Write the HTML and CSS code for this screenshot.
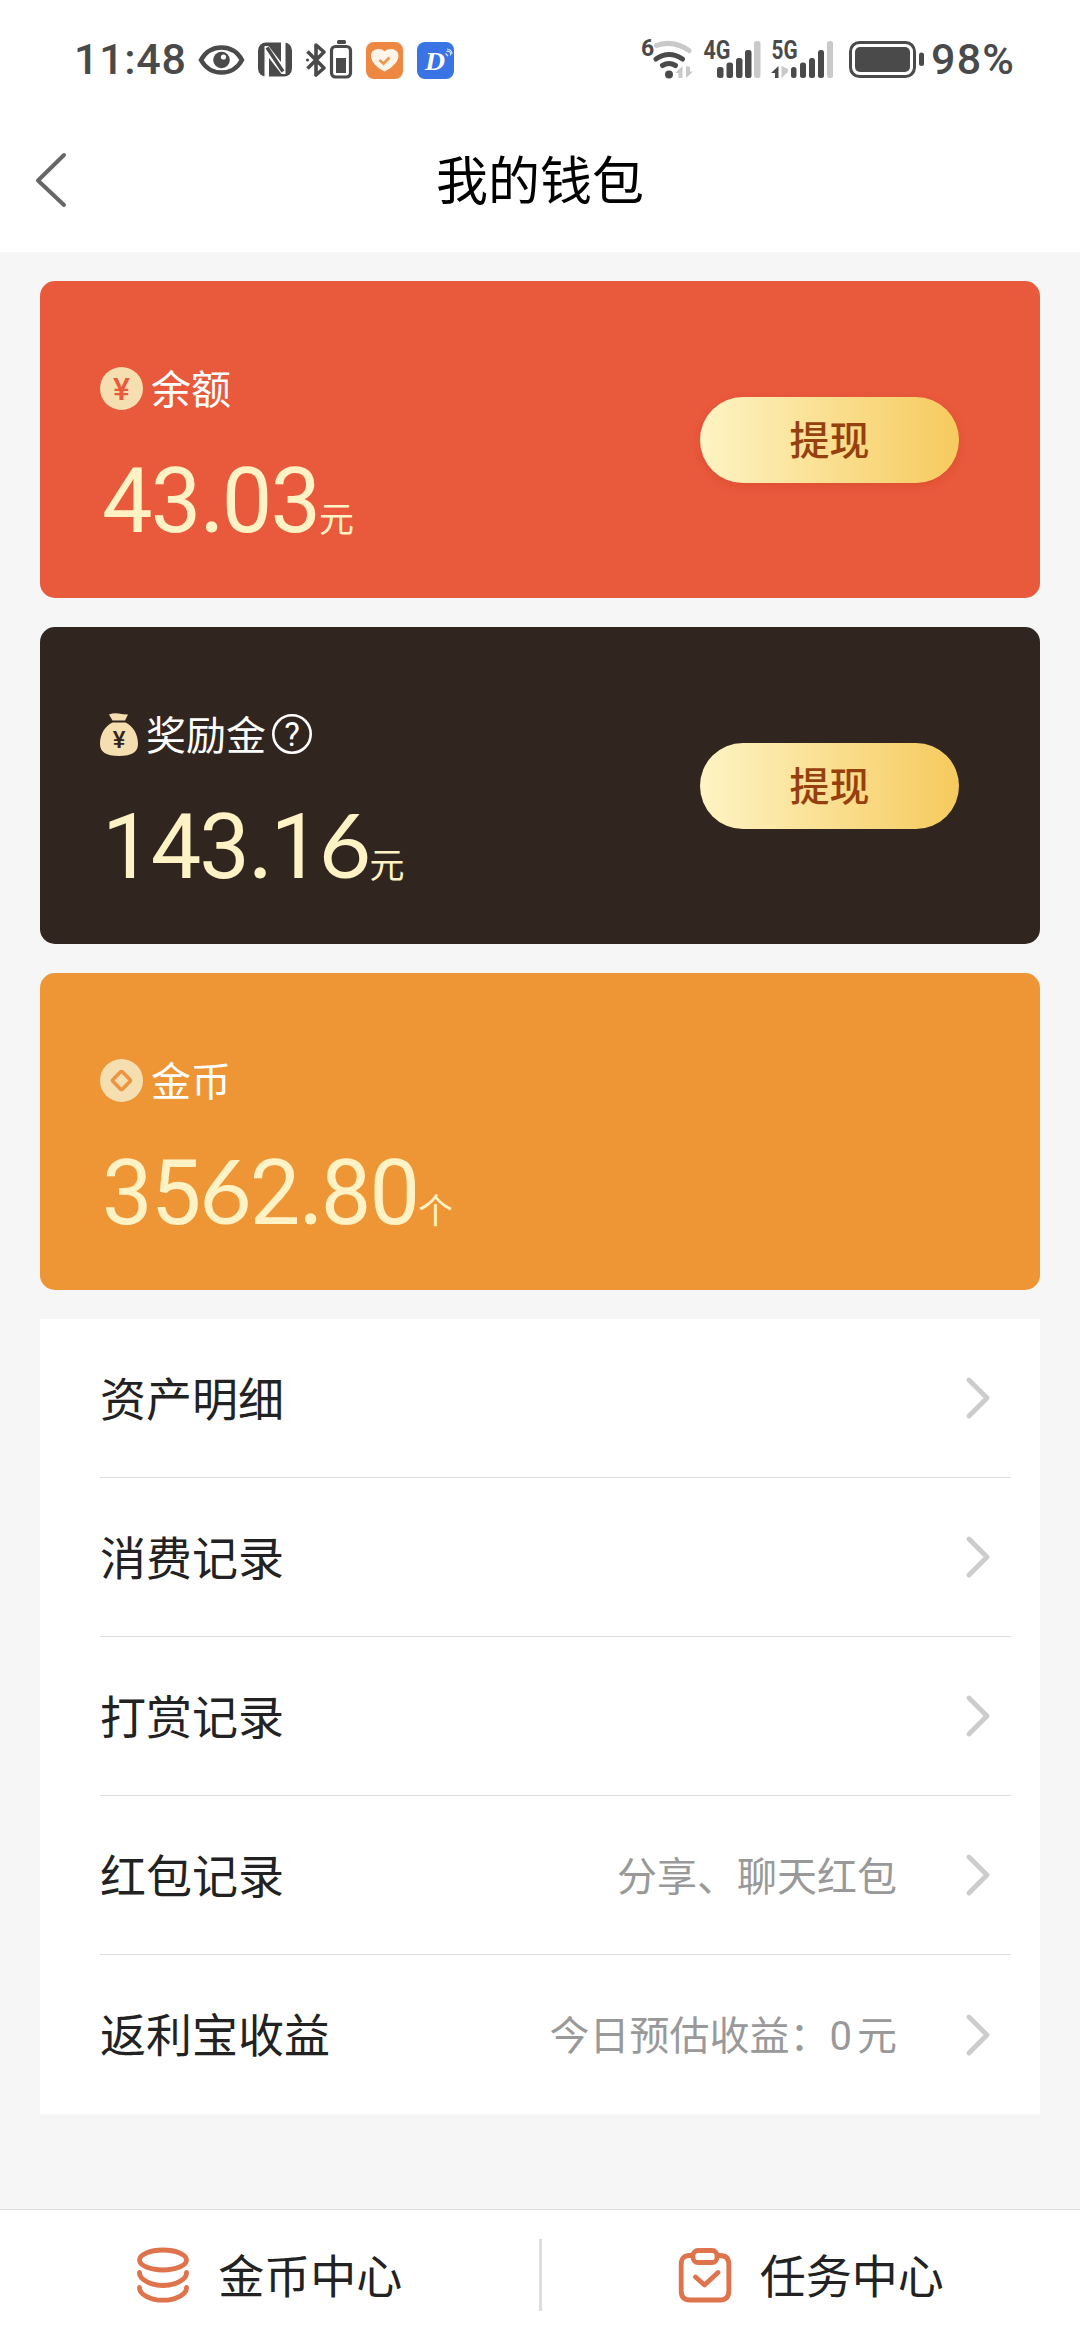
FILE: index.html
```html
<!DOCTYPE html>
<html lang="zh-CN">
<head>
<meta charset="utf-8">
<title>我的钱包</title>
<link rel="stylesheet" href="styles.css">
</head>
<body>
<div class="screen">
  <div class="status">
    <span class="clock">11:48</span>
    <svg class="status-left" viewBox="196 36 262 46" width="262" height="46">
      <path d="M201 60C206 51 213 47.500 221.500 47.500S237 51 242 60C237 69 230 72.500 221.500 72.500S206 69 201 60Z" fill="none" stroke="#4a4a4a" stroke-width="4.500"/>
      <circle cx="221.500" cy="60" r="8.300" fill="#4a4a4a"/>
      <circle cx="223.500" cy="57" r="2.600" fill="#fff"/>
      <rect x="258" y="42.500" width="34" height="34" rx="8" fill="#4a4a4a"/>
      <path d="M268 77.500L265.500 74V47L282 66V42M268.500 77V53L284.500 72V45L282 41.500" fill="none" stroke="#fff" stroke-width="0"/>
      <path d="M264.500 78V46H268.500L281 62V42H285.500V74H281.500L269 58V78Z" fill="#fff"/>
      <path d="M267 47.500L283 71.500" fill="none" stroke="#4a4a4a" stroke-width="3.500"/>
      <path d="M307.500 51.500L324 68L316 75V45L324 52L307.500 68.500" fill="none" stroke="#4a4a4a" stroke-width="3.600" stroke-linejoin="round"/>
      <circle cx="307.500" cy="60" r="1.600" fill="#4a4a4a"/>
      <rect x="337" y="40" width="9" height="4" rx="1.500" fill="#4a4a4a"/>
      <rect x="331.500" y="46.500" width="19" height="30.500" rx="4" fill="#fff" stroke="#4a4a4a" stroke-width="3.200"/>
      <rect x="336" y="58" width="10" height="15" fill="#4a4a4a"/>
      <rect x="366" y="42" width="37" height="37" rx="8" fill="#ee8742"/>
      <path d="M384.500 71.500C377 68 371 61.500 371 56C371 51 375 49 378.500 49C381.500 49 383.500 50 384.500 51.500C385.500 50 388 49 391 49C394.500 49 398.500 51 398.500 56C398.500 61.500 392 68 384.500 71.500Z" fill="#fff4e8"/>
      <path d="M379.500 60L383.500 63.500L389.500 57.500" fill="none" stroke="#e89a50" stroke-width="2.800"/>
      <rect x="417" y="42" width="37" height="37" rx="8" fill="#3a73e4"/>
      <text class="app-letter" x="425" y="70" textLength="20" lengthAdjust="spacingAndGlyphs">D</text>
      <path d="M445.500 53.500L448 56M446.500 51.500a3 3 0 0 1 4 4M447 49a5 5 0 0 1 5 5" fill="none" stroke="#dfe9ff" stroke-width="1.100"/>
    </svg>
    <svg class="status-right" viewBox="640 36 286 46" width="286" height="46">
      <text class="tag" x="641" y="55.500" font-size="23">6</text>
      <g fill="none" stroke="#4a4a4a" stroke-width="5" stroke-linecap="round">
        <path d="M656.500 45.500Q673 39.500 689 50.500" stroke="#c9c9c9"/>
        <path d="M656 59Q669 50 682.500 59"/>
        <path d="M662.500 65.500Q669 61.500 675.500 65.500"/>
      </g>
      <circle cx="669" cy="74.500" r="4" fill="#4a4a4a"/>
      <path d="M675 73L682.500 66V78H678.500V73ZM686 66V78L693 71.500H690V67Z" fill="#c9c9c9"/>
      <text class="tag" x="703.500" y="59" font-size="25.500" textLength="27" lengthAdjust="spacingAndGlyphs">4G</text>
      <g fill="#4a4a4a">
        <rect x="717" y="67" width="6.500" height="11" rx="2.500"/>
        <rect x="726.500" y="62.500" width="6.500" height="15.500" rx="2.500"/>
        <rect x="736" y="58" width="6.500" height="20" rx="2.500"/>
        <rect x="745" y="50" width="6.500" height="28" rx="2.500"/>
        <rect x="754" y="41" width="6.500" height="37" rx="2.500" fill="#c9c9c9"/>
      </g>
      <text class="tag" x="771.500" y="59" font-size="25.500" textLength="26" lengthAdjust="spacingAndGlyphs">5G</text>
      <path d="M771 73L778.500 66V78H775V73Z" fill="#4a4a4a"/>
      <path d="M781.500 66V78L788 72V69Z" fill="#c9c9c9"/>
      <g fill="#4a4a4a">
        <rect x="791" y="67" width="5.500" height="11" rx="2.500"/>
        <rect x="800" y="62.500" width="6" height="15.500" rx="2.500"/>
        <rect x="809" y="58" width="6" height="20" rx="2.500"/>
        <rect x="818" y="50" width="6" height="28" rx="2.500"/>
        <rect x="827" y="41" width="6" height="37" rx="2.500" fill="#c9c9c9"/>
        <rect x="855" y="47" width="55" height="25" rx="5"/>
        <rect x="919" y="52.500" width="5" height="13.500" rx="2.500"/>
      </g>
      <rect x="850.500" y="42.500" width="64" height="34" rx="9" fill="none" stroke="#4a4a4a" stroke-width="3"/>
    </svg>
    <span class="percent">98%</span>
  </div>

  <header class="header">
    <svg class="back" viewBox="0 0 34 58" width="34" height="58"><path d="M30 4L4 29.500L30 54" fill="none" stroke="#666" stroke-width="4" stroke-linecap="round" stroke-linejoin="round"/></svg>
    <h1 class="title">我的钱包</h1>
  </header>

  <main class="main">
    <section class="card card-balance">
      <div class="info">
        <div class="label">
          <svg class="coin" viewBox="0 0 43 43" width="43" height="43"><circle cx="21.500" cy="21.500" r="21.500" fill="#f5deaf"/><text class="yen" x="21.500" y="33" font-size="32" fill="#e9593c">¥</text></svg>
          <span class="label-text">余额</span>
        </div>
        <div class="amount"><span class="value">43<span class="alt dot">.</span>03</span><span class="unit">元</span></div>
      </div>
      <button class="withdraw">提现</button>
    </section>

    <section class="card card-bonus">
      <div class="info">
        <div class="label">
          <svg class="bag" viewBox="0 0 38 43" width="38" height="43"><path d="M9 1.500Q14 -.5 18.500 .5T28 1.500L25 7.500H12.500ZM12.500 9.500H25.500C33 13 38 21 38 31C38 39 32 43 19 43S0 39 0 31C0 21 5 13 12.500 9.500Z" fill="#f5deaf"/><text class="yen" x="19" y="35" font-size="24" fill="#312520">¥</text></svg>
          <span class="label-text">奖励金</span>
          <svg class="help" viewBox="0 0 40 40" width="40" height="40"><circle cx="20" cy="20" r="18.700" fill="none" stroke="#fff" stroke-width="2.600"/><text class="help-mark" x="20" y="31.500">?</text></svg>
        </div>
        <div class="amount"><span class="value">143<span class="alt dot">.</span>1<span class="alt">6</span></span><span class="unit">元</span></div>
      </div>
      <button class="withdraw">提现</button>
    </section>

    <section class="card card-gold">
      <div class="info">
        <div class="label">
          <svg class="coin" viewBox="0 0 43 43" width="43" height="43"><circle cx="21.500" cy="21.500" r="21.500" fill="#f5deaf"/><rect x="14.800" y="14.800" width="13.400" height="13.400" rx="1.500" transform="rotate(45 21.500 21.500)" fill="none" stroke="#ed9443" stroke-width="3.600"/></svg>
          <span class="label-text">金币</span>
        </div>
        <div class="amount"><span class="value">35<span class="alt">6</span>2<span class="alt dot">.</span>80</span><span class="unit">个</span></div>
      </div>
    </section>

    <ul class="list">
      <li class="row"><span class="name">资产明细</span><svg class="arrow" viewBox="0 0 24 42" width="24" height="42"><path d="M3 3L21 21L3 39"/></svg></li>
      <li class="row"><span class="name">消费记录</span><svg class="arrow" viewBox="0 0 24 42" width="24" height="42"><path d="M3 3L21 21L3 39"/></svg></li>
      <li class="row"><span class="name">打赏记录</span><svg class="arrow" viewBox="0 0 24 42" width="24" height="42"><path d="M3 3L21 21L3 39"/></svg></li>
      <li class="row"><span class="name">红包记录</span><span class="note">分享、聊天红包</span><svg class="arrow" viewBox="0 0 24 42" width="24" height="42"><path d="M3 3L21 21L3 39"/></svg></li>
      <li class="row"><span class="name">返利宝收益</span><span class="note">今日预估收益：<span class="zero">0</span>元</span><svg class="arrow" viewBox="0 0 24 42" width="24" height="42"><path d="M3 3L21 21L3 39"/></svg></li>
    </ul>
  </main>

  <nav class="tabs">
    <a class="tab">
      <svg viewBox="0 0 54 56" width="54" height="56" fill="none" stroke="#de734c" stroke-width="4.800" stroke-linecap="round"><ellipse cx="27" cy="13" rx="23.500" ry="10"/><path d="M3.500 25.500C3 32 14 38.500 27 38.500S51 32 50.500 25.500M3.500 40.500C3 47 14 53.200 27 53.200S51 47 50.500 40.500"/></svg>
      <span class="tab-text">金币中心</span>
    </a>
    <i class="divider"></i>
    <a class="tab">
      <svg viewBox="0 0 54 56" width="54" height="56" fill="none" stroke="#de734c" stroke-width="4.800" stroke-linecap="round" stroke-linejoin="round"><path d="M14 8.500H12Q3.200 8.500 3.200 17V44Q3.200 53 12 53H42Q50.800 53 50.800 44V17Q50.800 8.500 42 8.500H40"/><rect x="15" y="3.500" width="24" height="12" rx="5"/><path d="M17.500 30L26.500 38L40 25.500"/></svg>
      <span class="tab-text">任务中心</span>
    </a>
  </nav>
</div>
</body>
</html>
```

FILE: styles.css
```css
* { box-sizing: border-box; margin: 0; padding: 0; }
body {
  width: 1080px;
  font-family: "Noto Sans CJK SC", sans-serif;
  background: #f6f6f6;
}
svg { display: block; flex: none; }
.screen { display: flex; flex-direction: column; height: 2340px; }

.status {
  display: flex;
  align-items: center;
  height: 120px;
  padding: 0 66px 2px 74px;
  background: #fff;
  color: #4a4a4a;
  font: 500 43px/46px Roboto, sans-serif;
}
.clock { width: 122px; letter-spacing: .7px; }
.status-right { margin-left: auto; }
.percent { width: 88px; padding-left: 5px; letter-spacing: 1.200px; white-space: nowrap; }
.tag { font-family: Roboto, sans-serif; font-weight: 700; fill: #4a4a4a; }
.app-letter { font: italic 700 25px "Liberation Serif", serif; fill: #fff; }

.header {
  display: grid;
  grid-template-columns: 100px 1fr 100px;
  align-items: center;
  height: 132px;
  padding-bottom: 12px;
  background: #fff;
}
.back { margin-left: 34px; }
.title { padding-bottom: 4px; font-size: 52px; font-weight: 400; line-height: 60px; text-align: center; color: #000; }

.main { flex: 1; display: flex; flex-direction: column; gap: 29px; padding: 29px 40px 0; }
.card {
  display: flex;
  justify-content: space-between;
  align-items: center;
  height: 317px;
  padding: 0 81px 0 60px;
  border-radius: 15px;
}
.card-balance { background: #e9593c; }
.card-bonus { background: #312520; }
.card-gold { background: #ee9536; }
.info { align-self: flex-start; padding-top: 77px; }
.label { display: flex; align-items: center; gap: 8px; height: 60px; color: #fff; font-size: 40px; line-height: 60px; }
.label-text { padding-bottom: 3px; }
.help { margin-left: -2px; }
.yen { font-family: Roboto, sans-serif; font-weight: 500; text-anchor: middle; }
.help-mark { font: 400 33px Roboto, sans-serif; fill: #fff; text-anchor: middle; }
.amount { display: flex; align-items: baseline; margin-top: 26px; padding-left: 2px; line-height: 106px; color: #fff2c4; }
.value { font-family: Roboto, sans-serif; font-size: 90px; letter-spacing: -1.900px; }
.alt { font-family: Lato, sans-serif; }
.dot { padding: 0 1.500px; }
.unit { font-size: 35px; }
.withdraw {
  width: 259px;
  height: 86px;
  padding-bottom: 4px;
  border: 0;
  border-radius: 43px;
  background: linear-gradient(90deg, #fef4c4, #f6ca5d);
  box-shadow: 0 3px 8px rgba(180, 40, 10, .2);
  color: #96400f;
  font: 500 40px/80px "Noto Sans CJK SC", sans-serif;
}
.card-bonus .withdraw { box-shadow: none; }

.list { height: 795px; background: #fff; list-style: none; padding: 0 29px 0 60px; }
.row { display: flex; align-items: center; height: 159px; padding-right: 21px; border-bottom: 1px solid #dedede; }
.row:last-child { border-bottom: 0; }
.name { flex: 1; padding-bottom: 5px; font-size: 46px; color: #222; }
.note { padding-bottom: 3px; font-size: 40px; color: #999; margin-right: 69px; }
.zero { font-family: Roboto, sans-serif; padding-right: 5px; }
.arrow { fill: none; stroke: #ccc; stroke-width: 4.800; stroke-linecap: round; stroke-linejoin: round; }

.tabs { display: flex; align-items: center; height: 131px; border-top: 1px solid #ddd; background: #fff; }
.tab { flex: 1; display: flex; justify-content: center; align-items: center; gap: 28px; font-size: 46px; color: #222; }
.tab-text { padding-bottom: 5px; }
.divider { width: 3px; height: 72px; background: #ddd; }
```
